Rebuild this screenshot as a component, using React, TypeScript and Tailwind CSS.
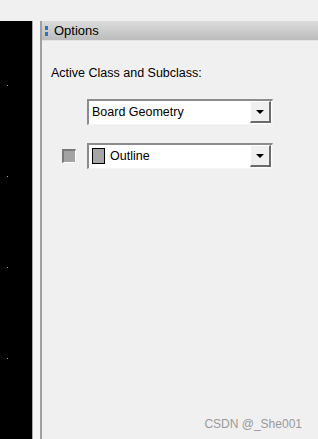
function Arrow() {
  return (
    <svg width="8" height="4" viewBox="0 0 8 4" className="block">
      <path d="M0 0h8L4 4z" fill="#000" />
    </svg>
  )
}

function Combo({ children }: { children: React.ReactNode }) {
  return (
    <div className="w-[186px] h-[26px] border-t-2 border-l-2 border-t-[#8c8c8c] border-l-[#8c8c8c] border-b border-r border-b-[#f4f4f4] border-r-[#f4f4f4] bg-white flex items-center">
      <div className="flex-1 flex items-center pl-[3px] h-full">{children}</div>
      <div className="w-[21px] h-[22px] mr-px bg-[#f0f0f0] border-t border-l border-t-white border-l-white border-b-2 border-r-2 border-b-[#6b6b6b] border-r-[#6b6b6b] flex items-center justify-center">
        <Arrow />
      </div>
    </div>
  )
}

export default function App() {
  return (
    <div className="w-[318px] h-[439px] bg-[#f0f0f0] flex overflow-hidden font-['Liberation_Sans',sans-serif]">
      {/* left canvas strip */}
      <div className="w-[42px] flex flex-col">
        <div className="h-[21px]" />
        <div className="flex-1 flex">
          <div className="w-[32px] bg-black flex flex-col items-start pl-[7px] pt-[64px] gap-[90px]">
            <span className="h-px w-px bg-[#a0a0a0]" />
            <span className="h-px w-px bg-[#a0a0a0]" />
            <span className="h-px w-px bg-[#a0a0a0]" />
            <span className="h-px w-px bg-[#a0a0a0]" />
          </div>
          <div className="w-px bg-[#a8a8a8]" />
          <div className="w-[7px] bg-[#f4f4f4]" />
          <div className="w-[2px] bg-[#a0a0a0]" />
        </div>
      </div>

      {/* options panel */}
      <div className="flex-1 flex flex-col">
        <div className="h-[21px]" />
        <div className="h-[20px] bg-gradient-to-b from-[#dcdcdc] to-[#bcbcbc] border-b border-[#e4e4e4] flex items-center">
          <div className="ml-[3px] flex flex-col gap-[2px]">
            <span className="w-[3px] h-[4px] bg-[#1c7ad6]" />
            <span className="w-[3px] h-[4px] bg-[#1c7ad6]" />
          </div>
          <span className="ml-[6px] text-[13px] text-black leading-none">Options</span>
        </div>

        <div className="pl-[9px] pt-[26px] text-[12.5px] text-black leading-none">Active Class and Subclass:</div>

        <div className="pl-[45px] pt-[19px]">
          <Combo>
            <span className="text-[12.5px] text-black leading-none">Board Geometry</span>
          </Combo>
        </div>

        <div className="flex items-center pt-[18px]">
          <div className="ml-[20px] w-[14px] h-[14px] bg-[#a3a3a3] border-t-2 border-l-2 border-t-[#7a7a7a] border-l-[#7a7a7a] border-b border-r border-b-white border-r-white" />
          <div className="ml-[11px]">
            <Combo>
              <span className="w-[13px] h-[16px] bg-[#a6a6a6] border border-black" />
              <span className="ml-[5px] text-[12.5px] text-black leading-none">Outline</span>
            </Combo>
          </div>
        </div>

        <div className="mt-auto mb-[9px] text-right pr-[16px] text-[12px] text-[#9a9a9a] leading-none">CSDN @_She001</div>
      </div>
    </div>
  )
}
